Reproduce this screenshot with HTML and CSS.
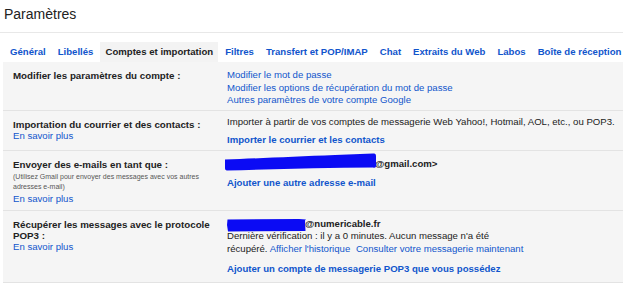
FILE: index.html
```html
<!DOCTYPE html>
<html lang="fr">
<head>
    <meta charset="UTF-8">
    <title>Paramètres</title>
    <link rel="stylesheet" href="styles.css">
</head>
<body>

    <h1 class="titre">Paramètres</h1>

    <ul class="onglets">
        <li><a href="#">Général</a></li>
        <li><a href="#">Libellés</a></li>
        <li class="actif"><a href="#">Comptes et importation</a></li>
        <li><a href="#">Filtres</a></li>
        <li><a href="#">Transfert et POP/IMAP</a></li>
        <li><a href="#">Chat</a></li>
        <li><a href="#">Extraits du Web</a></li>
        <li><a href="#">Labos</a></li>
        <li><a href="#">Boîte de réception</a></li>
    </ul>

    <div class="panneau">

        <div class="ligne">
            <div class="libelle">
                <h3>Modifier les paramètres du compte :</h3>
            </div>
            <div class="valeur">
                <a href="#" class="lien">Modifier le mot de passe</a><br>
                <a href="#" class="lien">Modifier les options de récupération du mot de passe</a><br>
                <a href="#" class="lien">Autres paramètres de votre compte Google</a>
            </div>
        </div>

        <div class="ligne">
            <div class="libelle">
                <h3>Importation du courrier et des contacts :</h3>
                <a href="#" class="savoir">En savoir plus</a>
            </div>
            <div class="valeur compact">
                <p>Importer à partir de vos comptes de messagerie Web Yahoo!, Hotmail, AOL, etc., ou POP3.</p>
                <a href="#" class="action">Importer le courrier et les contacts</a>
            </div>
        </div>

        <div class="ligne large">
            <div class="libelle">
                <h3>Envoyer des e-mails en tant que :</h3>
                <p class="aide">(Utilisez Gmail pour envoyer des messages avec vos autres<br>adresses e-mail)</p>
                <a href="#" class="savoir">En savoir plus</a>
            </div>
            <div class="valeur">
                <p class="adresse"><span class="masque masque-long"><svg width="152" height="18" viewBox="0 0 152 18"><path d="M0 6.5 C30 5.5 70 3.5 110 2 L148 0.5 C150 0.5 151 1 151 3 L151 13 C151 14.5 150 15 148 14.5 C100 15 50 16 2 17.5 C0.5 17.5 0 16.5 0 15 Z" fill="#0b0bf4"/></svg></span><b>@gmail.com&gt;</b></p>
                <a href="#" class="action espace">Ajouter une autre adresse e-mail</a>
            </div>
        </div>

        <div class="ligne large">
            <div class="libelle">
                <h3>Récupérer les messages avec le protocole POP3 :</h3>
                <a href="#" class="savoir">En savoir plus</a>
            </div>
            <div class="valeur">
                <p class="courriel"><span class="masque masque-court"><svg width="80" height="13" viewBox="0 0 80 13"><path d="M0.5 0.5 L72 0 L79 0.5 L78 1.5 L78.5 12 L1 12.5 L0 6 Z" fill="#0b0bf4"/></svg></span><b>@numericable.fr</b></p>
                <p class="statut">Dernière vérification : il y a 0 minutes. Aucun message n'a été<br>
                récupéré. <a href="#" class="lien">Afficher l'historique</a> <a href="#" class="lien suite">Consulter votre messagerie maintenant</a></p>
                <a href="#" class="action pop">Ajouter un compte de messagerie POP3 que vous possédez</a>
            </div>
        </div>

    </div>

</body>
</html>
```

FILE: styles.css
```css
* {
    margin: 0;
    padding: 0;
    box-sizing: border-box;
}

body {
    font-family: "Liberation Sans", Arial, sans-serif;
    font-size: 9.6px;
    line-height: 12.5px;
    color: #222;
    background-color: #fff;
}

a {
    color: #15c;
    text-decoration: none;
}

.titre {
    font-size: 14px;
    font-weight: normal;
    line-height: 16px;
    height: 33px;
    padding: 6px 0 0 4px;
    border-bottom: 1px solid #e8e8e8;
}

.onglets {
    list-style: none;
    display: flex;
    white-space: nowrap;
    overflow: hidden;
    padding: 9px 0 0 4px;
}

.onglets li {
    margin: 0 1px;
    padding: 0 5px;
    font-size: 9.6px;
    line-height: 20px;
    font-weight: bold;
}

.onglets li.actif {
    background-color: #f3f3f3;
}

.onglets li.actif a {
    color: #222;
}

.panneau {
    margin-left: 3px;
    background-color: #f5f5f5;
}

.ligne {
    display: flex;
    padding: 7px 0 3px;
    border-bottom: 1px solid #e3e3e3;
}

.ligne.large {
    padding-bottom: 6px;
}

.libelle {
    width: 224px;
    flex-shrink: 0;
    padding: 1px 14px 0 10px;
}

.libelle h3 {
    font-size: 9.75px;
    line-height: 11px;
    font-weight: bold;
}

.savoir {
    display: block;
    line-height: 11.5px;
}

.aide {
    margin-top: 2px;
    font-size: 7px;
    line-height: 10.5px;
    white-space: nowrap;
    color: #555;
}

.valeur.compact {
    margin-top: -2px;
}

.action {
    display: inline-block;
    margin-top: 6px;
    font-weight: bold;
}

.action.espace {
    margin-top: 7px;
}

.action.pop {
    margin-top: 8px;
}

.masque {
    position: relative;
    display: inline-block;
    vertical-align: top;
    height: 10px;
}

.masque svg {
    position: absolute;
}

.masque-long {
    width: 148px;
}

.masque-long svg {
    left: -2px;
    top: -4.5px;
}

.masque-court {
    width: 78px;
}

.masque-court svg {
    left: 0;
    top: 0.5px;
}

.courriel {
    line-height: 11px;
}

.statut {
    line-height: 13px;
}

.suite {
    margin-left: 3px;
}
```
